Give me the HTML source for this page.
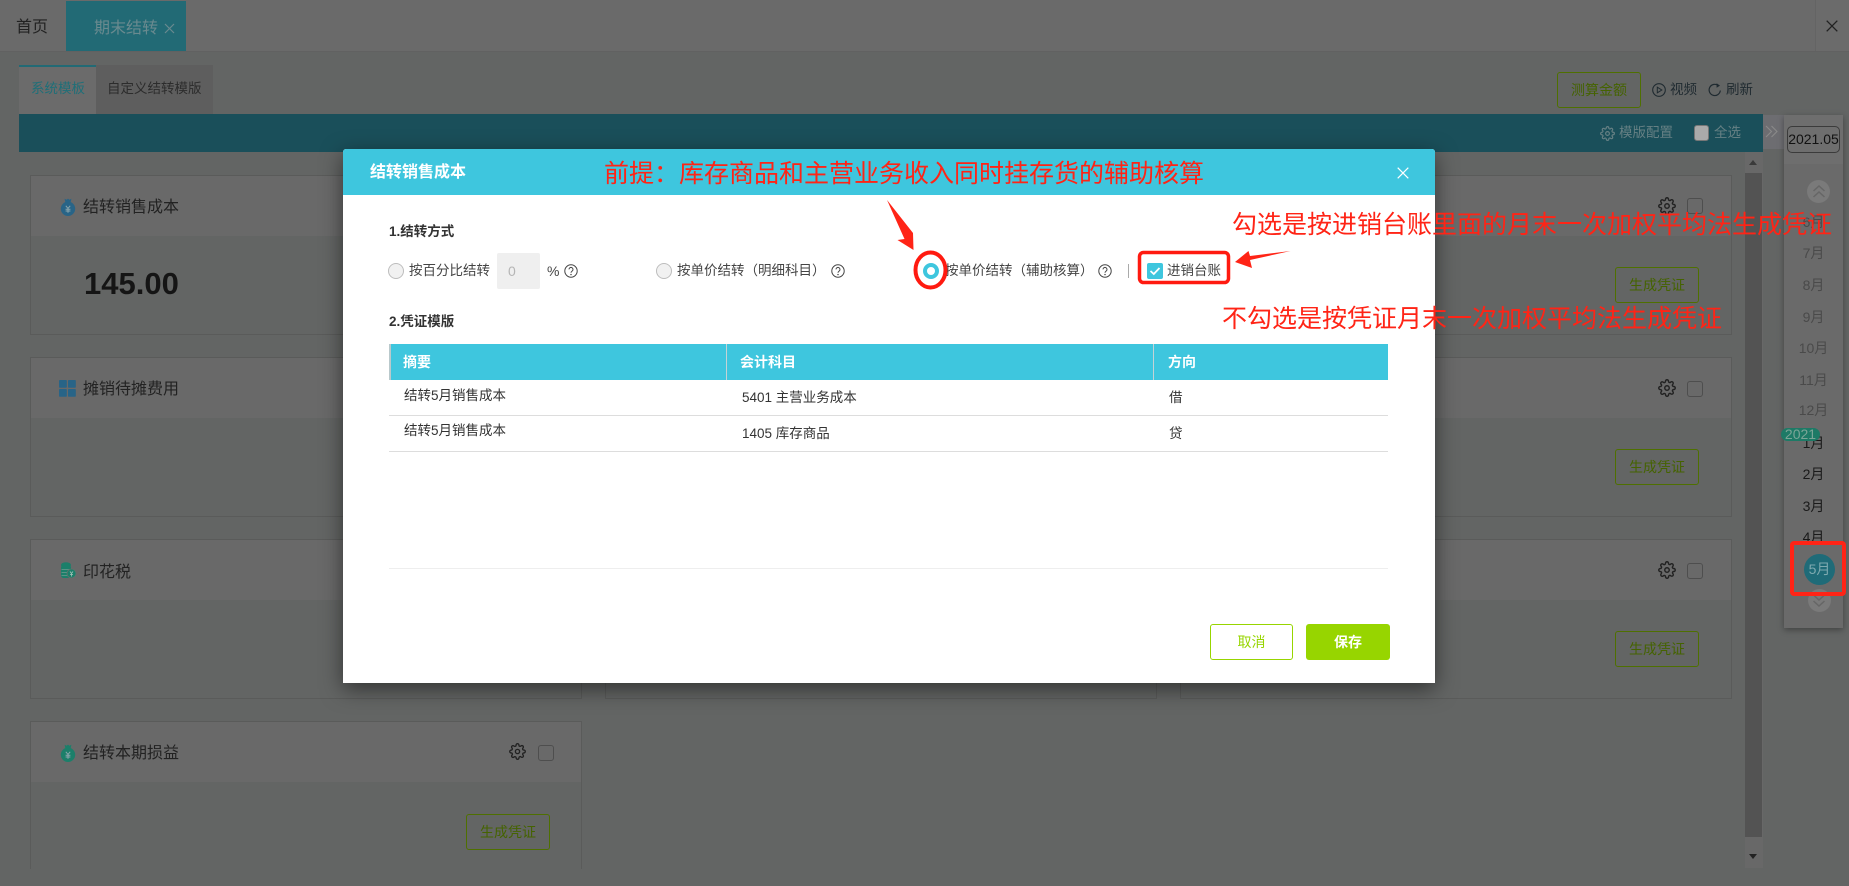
<!DOCTYPE html>
<html lang="zh-CN"><head><meta charset="utf-8"><title>期末结转</title>
<style>
html,body{margin:0;padding:0;width:1849px;height:886px;overflow:hidden;background:#636564}
body{position:relative;font-family:"Liberation Sans","Noto Sans CJK SC",sans-serif;font-size:13.5px;color:#222}
.a{position:absolute;box-sizing:border-box}
.t{position:absolute;white-space:nowrap;line-height:20px;height:20px}
.card{position:absolute;box-sizing:border-box;width:552px;height:160px;border:1px solid #5a5b5a;background:#636564}
.card .h{position:absolute;left:0;right:0;top:0;height:60px;background:#696969}
.gbtn{position:absolute;box-sizing:border-box;width:84px;height:36px;border:1px solid #4f7000;border-radius:3px;color:#456300;text-align:center;line-height:34px;font-size:14px}
.cb{position:absolute;box-sizing:border-box;width:16px;height:16px;border:1px solid #4e4e4e;border-radius:3px}
.ann{position:absolute;white-space:nowrap;color:#ff2416;font-size:25px;line-height:34px;height:34px}
.m{position:absolute;left:1784px;width:59px;text-align:center;line-height:20px;font-size:14px;color:#1a1a1a}
.f{color:#4a4a4a}
.radio{position:absolute;box-sizing:border-box;width:16px;height:16px;border-radius:50%;border:1px solid #bdbdbd;background:#f1f1f1}
.d{color:#333;font-size:13.5px}
.hd{color:#fff;font-weight:bold;font-size:14px}
</style></head><body>
<svg width="0" height="0" style="position:absolute"><defs>
<symbol id="gear" viewBox="0 0 24 24"><circle cx="12" cy="12" r="3" fill="none" stroke="currentColor" stroke-width="1.9"/><path fill="none" stroke="currentColor" stroke-width="1.9" d="M19.4 15a1.65 1.65 0 0 0 .33 1.82l.06.06a2 2 0 0 1 0 2.83 2 2 0 0 1-2.83 0l-.06-.06a1.65 1.65 0 0 0-1.82-.33 1.65 1.65 0 0 0-1 1.51V21a2 2 0 0 1-2 2 2 2 0 0 1-2-2v-.09A1.65 1.65 0 0 0 9 19.4a1.65 1.65 0 0 0-1.82.33l-.06.06a2 2 0 0 1-2.83 0 2 2 0 0 1 0-2.83l.06-.06a1.65 1.65 0 0 0 .33-1.82 1.65 1.65 0 0 0-1.51-1H3a2 2 0 0 1-2-2 2 2 0 0 1 2-2h.09A1.65 1.65 0 0 0 4.6 9a1.65 1.65 0 0 0-.33-1.82l-.06-.06a2 2 0 0 1 0-2.83 2 2 0 0 1 2.83 0l.06.06a1.65 1.65 0 0 0 1.82.33H9a1.65 1.65 0 0 0 1-1.51V3a2 2 0 0 1 2-2 2 2 0 0 1 2 2v.09a1.65 1.65 0 0 0 1 1.51 1.65 1.65 0 0 0 1.82-.33l.06-.06a2 2 0 0 1 2.83 0 2 2 0 0 1 0 2.83l-.06.06a1.65 1.65 0 0 0-.33 1.82V9a1.65 1.65 0 0 0 1.51 1H21a2 2 0 0 1 2 2 2 2 0 0 1-2 2h-.09a1.65 1.65 0 0 0-1.51 1z"/></symbol>
<symbol id="help" viewBox="0 0 14 14"><circle cx="7" cy="7" r="6.2" fill="none" stroke="#444" stroke-width="1"/><path d="M5 5.4a2 2 0 1 1 3.1 1.7c-.7.5-1.1.8-1.1 1.7" fill="none" stroke="#444" stroke-width="1"/><circle cx="7" cy="10.6" r=".7" fill="#444"/></symbol>
<symbol id="bag" viewBox="0 0 16 18"><circle cx="8" cy="10.8" r="7.2" fill="currentColor"/><path fill="currentColor" d="M4.6.8 6.6 1.8 8 .6 9.4 1.8 11.4.8 10.6 4.6H5.4z"/><path fill="none" stroke="#8ba6ad" stroke-width="1" d="M5.8 7.8 8 10.4l2.2-2.6M8 10.4v4.4M5.6 11.2h4.8M5.6 13h4.8"/></symbol>
</defs></svg>

<!-- top bar -->
<div class="a" style="left:0;top:0;width:1849px;height:52px;background:#6a6a6a;border-bottom:1px solid #616161"></div>
<div class="t" style="left:16px;top:18px;font-size:16px;color:#222">首页</div>
<div class="a" style="left:66px;top:1px;width:120px;height:50px;background:#226a75"></div>
<div class="t" style="left:94px;top:19px;font-size:16px;color:#6a8a8f">期末结转</div>
<svg class="a" style="left:164px;top:23px" width="11" height="11" viewBox="0 0 11 11"><path d="M1 1l9 9M10 1l-9 9" stroke="#6a8a8f" stroke-width="1.2"/></svg>
<div class="a" style="left:1815px;top:0;width:34px;height:51px;background:#6b6b6b;border-left:1px solid #646464"></div>
<svg class="a" style="left:1826px;top:20px" width="12" height="12" viewBox="0 0 12 12"><path d="M.7.7l10.6 10.6M11.3.7.7 11.3" stroke="#222" stroke-width="1.3"/></svg>

<!-- sub tabs -->
<div class="a" style="left:19px;top:65px;width:77px;height:49px;background:#6b6b6b;border-top:2px solid #226a75"></div>
<div class="a" style="left:96px;top:65px;width:117px;height:49px;background:#5e5e5e"></div>
<div class="t" style="left:31px;top:79px;font-size:13.5px;color:#1f6f78">系统模板</div>
<div class="t" style="left:107px;top:79px;font-size:13.5px;color:#2c2c2c">自定义结转模版</div>
<div class="a" style="left:1557px;top:72px;width:84px;height:36px;border:1px solid #4f7000;border-radius:3px;text-align:center;line-height:34px;color:#456300;font-size:14px">测算金额</div>
<svg class="a" style="left:1652px;top:83px" width="14" height="14" viewBox="0 0 14 14"><circle cx="7" cy="7" r="6.3" fill="none" stroke="#1f2a30" stroke-width="1.1"/><path d="M5.3 4.2 9.8 7 5.3 9.8z" fill="none" stroke="#1f2a30"/></svg>
<div class="t" style="left:1670px;top:80px;font-size:13.5px;color:#1f2a30">视频</div>
<svg class="a" style="left:1708px;top:83px" width="14" height="14" viewBox="0 0 14 14"><path d="M12.3 7.5A5.6 5.6 0 1 1 10 2.4" fill="none" stroke="#1f2a30" stroke-width="1.2"/><path d="M8.6.2 12 2.6 8.6 4.7z" fill="#1f2a30"/></svg>
<div class="t" style="left:1726px;top:80px;font-size:13.5px;color:#1f2a30">刷新</div>

<!-- teal band -->
<div class="a" style="left:19px;top:114px;width:1744px;height:38px;background:#1a4f5a"></div>
<svg class="a" style="left:1600px;top:126px;color:#668084" width="15" height="15"><use href="#gear"/></svg>
<div class="t" style="left:1619px;top:123px;font-size:13.5px;color:#668084">模版配置</div>
<div class="a" style="left:1694px;top:125px;width:15px;height:16px;background:#aaa;border:1px solid #777;border-radius:3px"></div>
<div class="t" style="left:1714px;top:123px;font-size:13.5px;color:#668084">全选</div>
<div class="a" style="left:1763px;top:115px;width:21px;height:34px;background:#6d6d71"></div>
<svg class="a" style="left:1765px;top:125px" width="14" height="13" viewBox="0 0 14 13"><path d="M1 1l5.5 5.5L1 12M6.5 1 12 6.5 6.5 12" fill="none" stroke="#8a8a8a" stroke-width="1.1"/></svg>

<!-- scrollbar -->
<div class="a" style="left:1745px;top:152px;width:18px;height:716px;background:#686868"></div>
<div class="a" style="left:1745px;top:173px;width:17px;height:664px;background:#535353"></div>
<div class="a" style="left:1749px;top:160px;width:0;height:0;border-left:4.5px solid transparent;border-right:4.5px solid transparent;border-bottom:5px solid #3a3a3a"></div>
<div class="a" style="left:1749px;top:854px;width:0;height:0;border-left:4.5px solid transparent;border-right:4.5px solid transparent;border-top:5px solid #222"></div>

<!-- cards col 1 -->
<div class="card" style="left:30px;top:175px"><div class="h"></div></div>
<svg class="a" style="left:60px;top:198px;color:#286487" width="16" height="18"><use href="#bag"/></svg>
<div class="t" style="left:83px;top:198px;font-size:16px;color:#222">结转销售成本</div>
<div class="t" style="left:84px;top:268px;font-size:31px;font-weight:bold;line-height:32px;height:32px;color:#151515">145.00</div>

<div class="card" style="left:30px;top:357px"><div class="h"></div></div>
<svg class="a" style="left:59px;top:380px" width="17" height="17" viewBox="0 0 17 17" fill="#286487"><rect width="7.8" height="7.8" rx=".8"/><rect x="9" width="7.8" height="7.8" rx=".8"/><rect y="9" width="7.8" height="7.8" rx=".8"/><rect x="9" y="9" width="7.8" height="7.8" rx=".8"/></svg>
<div class="t" style="left:83px;top:380px;font-size:16px;color:#222">摊销待摊费用</div>

<div class="card" style="left:30px;top:539px"><div class="h"></div></div>
<svg class="a" style="left:60px;top:562px" width="16" height="17" viewBox="0 0 16 17"><ellipse cx="6" cy="3" rx="5" ry="2.8" fill="#1c7f6a"/><rect x="1" y="3" width="10" height="13" rx="2.5" fill="#1c7f6a"/><path d="M1.5 7.5h9M1.5 10.5h9M1.5 13.5h9" stroke="#6f9a90" stroke-width=".8"/><circle cx="11.5" cy="11.5" r="4.5" fill="#1c7f6a" stroke="#63716c" stroke-width=".8"/><path d="M10 9.5l1.5 2 1.5-2M11.5 11.5v3M10 12.5h3" stroke="#a5c3ba" stroke-width=".8" fill="none"/></svg>
<div class="t" style="left:83px;top:563px;font-size:16px;color:#222">印花税</div>

<div class="a" style="left:30px;top:721px;width:552px;height:148px;border:1px solid #5a5b5a;border-bottom:none;background:#636564"><div class="a" style="left:0;right:0;top:0;height:60px;background:#696969"></div></div>
<svg class="a" style="left:60px;top:744px;color:#1c7f6a" width="16" height="18"><use href="#bag"/></svg>
<div class="t" style="left:83px;top:744px;font-size:16px;color:#222">结转本期损益</div>
<svg class="a" style="left:509px;top:743px;color:#222" width="17" height="17"><use href="#gear"/></svg>
<div class="cb" style="left:538px;top:745px"></div>
<div class="gbtn" style="left:466px;top:814px">生成凭证</div>

<!-- col 2 -->
<div class="card" style="left:605px;top:175px"><div class="h"></div></div>
<div class="card" style="left:605px;top:357px"><div class="h"></div></div>
<div class="card" style="left:605px;top:539px"><div class="h"></div></div>

<!-- col 3 -->
<div class="card" style="left:1180px;top:175px"><div class="h"></div></div>
<svg class="a" style="left:1658px;top:197px;color:#222" width="18" height="18"><use href="#gear"/></svg>
<div class="cb" style="left:1687px;top:198px"></div>
<div class="gbtn" style="left:1615px;top:267px">生成凭证</div>

<div class="card" style="left:1180px;top:357px"><div class="h"></div></div>
<svg class="a" style="left:1658px;top:379px;color:#222" width="18" height="18"><use href="#gear"/></svg>
<div class="cb" style="left:1687px;top:381px"></div>
<div class="gbtn" style="left:1615px;top:449px">生成凭证</div>

<div class="card" style="left:1180px;top:539px"><div class="h"></div></div>
<svg class="a" style="left:1658px;top:561px;color:#222" width="18" height="18"><use href="#gear"/></svg>
<div class="cb" style="left:1687px;top:563px"></div>
<div class="gbtn" style="left:1615px;top:631px">生成凭证</div>

<!-- right month panel -->
<div class="a" style="left:1784px;top:115px;width:59px;height:513px;background:#6a6a6a;box-shadow:0 2px 6px rgba(0,0,0,.35)"></div>
<div class="a" style="left:1784px;top:115px;width:59px;height:49px;background:#6e6e6e"></div>
<div class="a" style="left:1787px;top:126px;width:53px;height:27px;border:1px solid #3b3b3b;border-radius:5px;text-align:center;line-height:25px;font-size:14px;color:#111;white-space:nowrap;overflow:hidden">2021.05</div>
<div class="a" style="left:1807px;top:180px;width:23px;height:23px;border-radius:50%;background:#7a7a7a"></div>
<svg class="a" style="left:1812px;top:184px" width="14" height="15" viewBox="0 0 14 15"><path d="M1.5 7 7 2l5.5 5M1.5 13 7 8l5.5 5" fill="none" stroke="#666" stroke-width="1.5"/></svg>
<div class="m f" style="top:212px">6月</div>
<div class="m f" style="top:243px">7月</div>
<div class="m f" style="top:275px">8月</div>
<div class="m f" style="top:307px">9月</div>
<div class="m f" style="top:338px">10月</div>
<div class="m f" style="top:370px">11月</div>
<div class="m f" style="top:400px">12月</div>
<div class="m" style="top:433px">1月</div>
<div class="m" style="top:464px">2月</div>
<div class="m" style="top:496px">3月</div>
<div class="m" style="top:527px">4月</div>
<div class="a" style="left:1781px;top:428px;width:39px;height:13px;border-radius:7px;background:#1d7a66;color:#7aa597;font-size:14px;line-height:13px;text-align:center;white-space:nowrap">2021</div>
<div class="a" style="left:1804px;top:554px;width:31px;height:31px;border-radius:50%;background:#1f6b78;color:#7eaab0;font-size:14px;line-height:31px;text-align:center">5月</div>
<div class="a" style="left:1808px;top:589px;width:23px;height:23px;border-radius:50%;background:#7a7a7a"></div>
<svg class="a" style="left:1812px;top:593px" width="14" height="15" viewBox="0 0 14 15"><path d="M1.5 2 7 7l5.5-5M1.5 8 7 13l5.5-5" fill="none" stroke="#666" stroke-width="1.5"/></svg>
<div class="a" style="left:1790px;top:541px;width:56px;height:55px;border:4px solid #ff2416;border-radius:4px"></div>

<!-- modal -->
<div class="a" style="left:343px;top:149px;width:1092px;height:534px;background:#fff;border-radius:3px 3px 0 0;box-shadow:0 6px 22px rgba(0,0,0,.5)"></div>
<div class="a" style="left:343px;top:149px;width:1092px;height:46px;background:#3ec6de;border-radius:3px 3px 0 0"></div>
<div class="t" style="left:370px;top:163px;font-size:16px;font-weight:bold;color:#fff">结转销售成本</div>
<svg class="a" style="left:1397px;top:167px" width="12" height="12" viewBox="0 0 12 12"><path d="M.7.7l10.6 10.6M11.3.7.7 11.3" stroke="#fff" stroke-width="1.2"/></svg>

<div class="t" style="left:389px;top:222px;font-size:13.5px;font-weight:bold;color:#333">1.结转方式</div>
<div class="radio" style="left:388px;top:263px"></div>
<div class="t" style="left:409px;top:261px;color:#444">按百分比结转</div>
<div class="a" style="left:497px;top:253px;width:43px;height:36px;background:#efefef;border-radius:2px;color:#b5b5b5;font-size:14px;line-height:36px;padding-left:11px">0</div>
<div class="t" style="left:547px;top:261px;color:#444;font-size:14px">%</div>
<svg class="a" style="left:564px;top:264px" width="14" height="14"><use href="#help"/></svg>
<div class="radio" style="left:656px;top:263px"></div>
<div class="t" style="left:677px;top:261px;color:#444">按单价结转（明细科目）</div>
<svg class="a" style="left:831px;top:264px" width="14" height="14"><use href="#help"/></svg>
<div class="a" style="left:923px;top:263px;width:16px;height:16px;border-radius:50%;border:4px solid #3ec6de;background:#fff"></div>
<div class="t" style="left:945px;top:261px;color:#444">按单价结转（辅助核算）</div>
<svg class="a" style="left:1098px;top:264px" width="14" height="14"><use href="#help"/></svg>
<div class="a" style="left:1128px;top:264px;width:1px;height:14px;background:#aaa"></div>
<div class="a" style="left:1147px;top:263px;width:16px;height:16px;border-radius:2px;background:#3ec6de"></div>
<svg class="a" style="left:1147px;top:263px" width="16" height="16" viewBox="0 0 16 16"><path d="M3.5 8 6.8 11 12.5 5" fill="none" stroke="#fff" stroke-width="1.8"/></svg>
<div class="t" style="left:1167px;top:261px;color:#444">进销台账</div>

<div class="t" style="left:389px;top:312px;font-size:13.5px;font-weight:bold;color:#333">2.凭证模版</div>

<div class="a" style="left:389px;top:344px;width:999px;height:36px;background:#3ec6de"></div>
<div class="a" style="left:389px;top:344px;width:2px;height:36px;background:#b9c9cc"></div>
<div class="a" style="left:726px;top:344px;width:1px;height:36px;background:#c4d3d6"></div>
<div class="a" style="left:1153px;top:344px;width:1px;height:36px;background:#c4d3d6"></div>
<div class="t hd" style="left:403px;top:352px">摘要</div>
<div class="t hd" style="left:740px;top:352px">会计科目</div>
<div class="t hd" style="left:1168px;top:352px">方向</div>
<div class="t d" style="left:404px;top:386px">结转5月销售成本</div>
<div class="t d" style="left:742px;top:388px">5401 主营业务成本</div>
<div class="t d" style="left:1169px;top:388px">借</div>
<div class="a" style="left:389px;top:415px;width:999px;height:1px;background:#ddd"></div>
<div class="t d" style="left:404px;top:421px">结转5月销售成本</div>
<div class="t d" style="left:742px;top:424px">1405 库存商品</div>
<div class="t d" style="left:1169px;top:424px">贷</div>
<div class="a" style="left:389px;top:451px;width:999px;height:1px;background:#ddd"></div>
<div class="a" style="left:389px;top:568px;width:999px;height:1px;background:#eee"></div>

<div class="a" style="left:1210px;top:624px;width:83px;height:36px;border:1px solid #97d500;border-radius:3px;background:#fff;color:#97d500;text-align:center;line-height:34px;font-size:14px">取消</div>
<div class="a" style="left:1306px;top:624px;width:84px;height:36px;background:#97d500;border-radius:3px;color:#fff;text-align:center;line-height:36px;font-size:14px;font-weight:bold">保存</div>

<!-- annotations -->
<div class="ann" style="left:604px;top:157px">前提：库存商品和主营业务收入同时挂存货的辅助核算</div>
<div class="ann" style="left:1232px;top:208px">勾选是按进销台账里面的月末一次加权平均法生成凭证</div>
<div class="ann" style="left:1222px;top:302px">不勾选是按凭证月末一次加权平均法生成凭证</div>
<svg class="a" style="left:0;top:0" width="1849" height="886" viewBox="0 0 1849 886">
<path d="M887 200 913 233 913.5 250 897.5 240 904.5 239z" fill="#ff2416"/>
<ellipse cx="930.5" cy="270" rx="15" ry="17.5" fill="none" stroke="#ff1a10" stroke-width="4"/>
<rect x="1139.5" y="252.5" width="89" height="30" rx="4" fill="none" stroke="#ff1a10" stroke-width="3.5"/>
<path d="M1235 262 1248.5 251 1250 256 1290.5 251 1250 260 1252 268z" fill="#ff2416"/>
</svg>
</body></html>
